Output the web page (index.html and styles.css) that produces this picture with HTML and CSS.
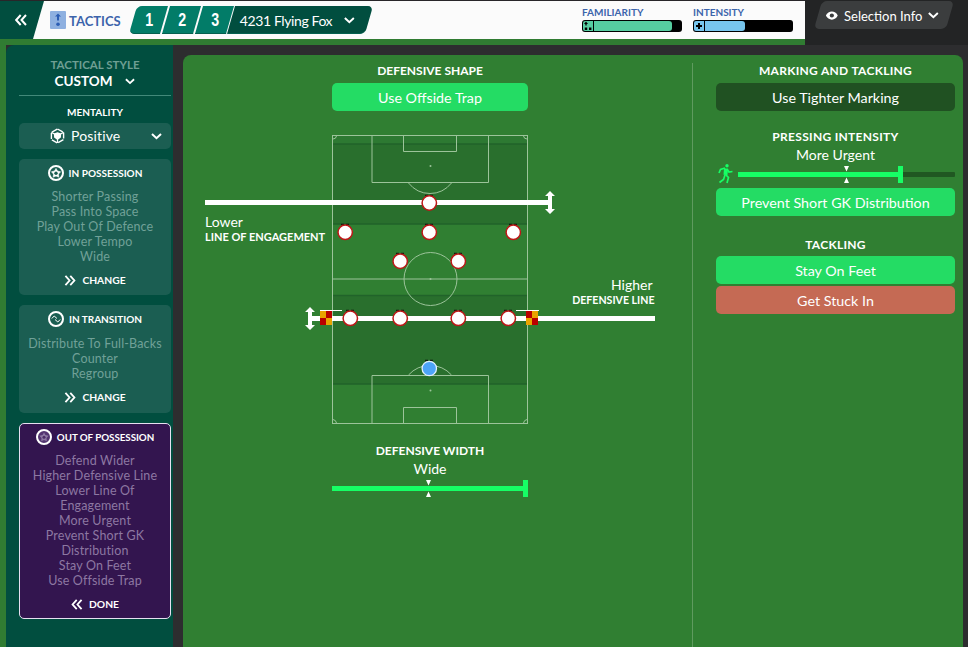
FILE: index.html
```html
<!DOCTYPE html>
<html lang="en">
<head>
    <meta charset="UTF-8">
    <meta name="viewport" content="width=device-width, initial-scale=1.0">
    <title>Tactics</title>
    <link rel="stylesheet" href="styles.css">
</head>
<body>
    <header class="topbar">
        <div class="topbar-main">
            <div class="back">
                <svg width="12" height="12" viewBox="0 0 12 12"><path class="chevron" d="M5.7 1 L1.2 6 L5.7 11 M11 1 L6.5 6 L11 11"/></svg>
            </div>
            <div class="brand">
                <svg width="16" height="18" viewBox="0 0 16 18">
                    <rect width="16" height="18" rx="1" fill="#8eb0e0"/>
                    <path d="M8 2.5 L11 5.5 H9 V9.5 H7 V5.5 H5 Z" fill="#2c5db3"/>
                    <circle cx="8" cy="13.2" r="1.8" fill="#2c5db3"/>
                </svg>
                <span>TACTICS</span>
            </div>
            <nav class="tabs">
                <div class="tab tab-first"><span>1</span></div>
                <div class="tab"><span>2</span></div>
                <div class="tab"><span>3</span></div>
                <div class="tab-name">
                    <span>4231 Flying Fox</span>
                    <svg width="11" height="7" viewBox="0 0 11 7"><path class="chevron" d="M1 1 L5.5 5.2 L10 1"/></svg>
                </div>
            </nav>
            <div class="meters">
                <div class="meter">
                    <div class="meter-label">FAMILIARITY</div>
                    <div class="meter-bar mint">
                        <div class="meter-icon">
                            <svg width="10" height="10" viewBox="0 0 10 10"><path d="M3 0.5 L5 3 H1 Z M2.3 3 H3.7 V4.5 H2.3 Z M1.8 6.5 H4.2 V9 H1.8 Z M6 6.5 H8.4 V9 H6 Z"/></svg>
                        </div>
                        <div class="meter-fill" style="width: 78px"></div>
                    </div>
                </div>
                <div class="meter">
                    <div class="meter-label">INTENSITY</div>
                    <div class="meter-bar sky">
                        <div class="meter-icon">
                            <svg width="10" height="10" viewBox="0 0 10 10"><path d="M4 2 H6 V4 H8 V6 H6 V8 H4 V6 H2 V4 H4 Z"/></svg>
                        </div>
                        <div class="meter-fill" style="width: 40px"></div>
                    </div>
                </div>
            </div>
        </div>
        <div class="topbar-side">
            <div class="selection">
                <svg width="12" height="9" viewBox="0 0 12 9"><path d="M0 4.5 C2.5 -1 9.5 -1 12 4.5 C9.5 10 2.5 10 0 4.5 Z" fill="#fff"/><circle cx="6" cy="4.5" r="2.1" fill="#3b3d3e"/></svg>
                <span>Selection Info</span>
                <svg width="11" height="7" viewBox="0 0 11 7"><path class="chevron" d="M1 1 L5.5 5.2 L10 1"/></svg>
            </div>
        </div>
    </header>

    <div class="page">
        <aside class="sidebar">
            <div class="style">
                <div class="style-label">TACTICAL STYLE</div>
                <div class="style-value">
                    <span>CUSTOM</span>
                    <svg width="10" height="7" viewBox="0 0 11 7"><path class="chevron" d="M1 1 L5.5 5.2 L10 1"/></svg>
                </div>
            </div>
            <div class="mentality-label">MENTALITY</div>
            <div class="mentality">
                <svg width="15" height="16" viewBox="0 0 15 16">
                    <path d="M7.5 1 L13.6 4.4 V11.6 L7.5 15 L1.4 11.6 V4.4 Z" fill="none" stroke="#fff" stroke-width="1.4" stroke-dasharray="6 1.2"/>
                    <path d="M3.8 5.6 L7.5 4.2 L11.2 5.6 L10.9 9.6 L7.5 12 L4.1 9.6 Z" fill="#fff"/>
                    <path d="M1.4 4.4 L4.5 6 M13.6 4.4 L10.5 6 M7.5 11 V15" stroke="#fff" stroke-width="1.2"/>
                </svg>
                <span>Positive</span>
                <svg class="mentality-arrow" width="11" height="7" viewBox="0 0 11 7"><path class="chevron" d="M1 1 L5.5 5.2 L10 1"/></svg>
            </div>

            <section class="card">
                <h2>
                    <svg width="16" height="16" viewBox="0 0 16 16">
                        <circle cx="8" cy="8" r="7" fill="none" stroke="#fff" stroke-width="2"/>
                        <path d="M8 3.4 L9.5 6 L12.6 6.8 L10.5 9.1 L10.8 12.2 L8 11 L5.2 12.2 L5.5 9.1 L3.4 6.8 L6.5 6 Z" fill="#fff" stroke="#fff" stroke-width=".6"/>
                        <circle cx="8" cy="8.3" r="1.7" fill="#1b5e52"/>
                    </svg>
                    <span>IN POSSESSION</span>
                </h2>
                <ul>
                    <li>Shorter Passing</li>
                    <li>Pass Into Space</li>
                    <li>Play Out Of Defence</li>
                    <li>Lower Tempo</li>
                    <li>Wide</li>
                </ul>
                <div class="action">
                    <svg width="12" height="11" viewBox="0 0 12 12"><path class="chevron" d="M1 1 L5.5 6 L1 11 M6.3 1 L10.8 6 L6.3 11"/></svg>
                    <span>CHANGE</span>
                </div>
            </section>

            <section class="card card-short">
                <h2>
                    <svg width="16" height="16" viewBox="0 0 16 16">
                        <circle cx="8" cy="8" r="7" fill="none" stroke="#fff" stroke-width="2"/>
                        <path d="M3.8 7.5 L6.2 5 L9 7.5 M12.2 8.5 L9.8 11 L7 8.5" fill="none" stroke="#fff" stroke-width="1"/>
                    </svg>
                    <span>IN TRANSITION</span>
                </h2>
                <ul>
                    <li>Distribute To Full-Backs</li>
                    <li>Counter</li>
                    <li>Regroup</li>
                </ul>
                <div class="action">
                    <svg width="12" height="11" viewBox="0 0 12 12"><path class="chevron" d="M1 1 L5.5 6 L1 11 M6.3 1 L10.8 6 L6.3 11"/></svg>
                    <span>CHANGE</span>
                </div>
            </section>

            <section class="card card-active">
                <h2>
                    <svg width="16" height="16" viewBox="0 0 16 16">
                        <circle cx="8" cy="8" r="7" fill="#543571" stroke="#fff" stroke-width="2"/>
                        <path d="M8 3.4 L9.5 6 L12.6 6.8 L10.5 9.1 L10.8 12.2 L8 11 L5.2 12.2 L5.5 9.1 L3.4 6.8 L6.5 6 Z" fill="#8d78a2"/>
                        <circle cx="8" cy="8.3" r="1.5" fill="#4b2d66"/>
                    </svg>
                    <span>OUT OF POSSESSION</span>
                </h2>
                <ul>
                    <li>Defend Wider</li>
                    <li>Higher Defensive Line</li>
                    <li>Lower Line Of<br>Engagement</li>
                    <li>More Urgent</li>
                    <li>Prevent Short GK<br>Distribution</li>
                    <li>Stay On Feet</li>
                    <li>Use Offside Trap</li>
                </ul>
                <div class="action">
                    <svg width="12" height="11" viewBox="0 0 12 12"><path class="chevron" d="M5.7 1 L1.2 6 L5.7 11 M11 1 L6.5 6 L11 11"/></svg>
                    <span>DONE</span>
                </div>
            </section>
        </aside>

        <main class="content">
            <section class="shape">
                <h3>DEFENSIVE SHAPE</h3>
                <div class="option on narrow">Use Offside Trap</div>
                <svg class="pitch" width="452" height="300" viewBox="204 130 452 300">
                    <!-- mown stripes -->
                    <rect x="332" y="135" width="196" height="10" fill="#2d7932"/>
                    <rect x="332" y="144" width="196" height="80" fill="#296f2d"/>
                    <rect x="332" y="295" width="196" height="89" fill="#296f2d"/>
                    <path d="M333 144 H527 M333 224 H527 M333 295.5 H527 M333 384 H527" stroke="#21632a" stroke-width="1.6"/>
                    <!-- markings -->
                    <g class="marking">
                        <rect x="332.5" y="135.5" width="195" height="288"/>
                        <path d="M332.5 279 H527.5"/>
                        <path d="M372 136 V182.5 H488.5 V136 M403.5 136 V151.5 H456.5 V136"/>
                        <path d="M372 423 V375.5 H488.5 V423 M403.5 423 V407.5 H456.5 V423"/>
                        <path d="M408.5 183 Q417 193.5 430 193.5 Q443 193.5 451.5 183"/>
                        <path d="M408.5 375 Q417 365.5 430 365.5 Q443 365.5 451.5 375"/>
                        <circle cx="430.5" cy="279" r="26.5"/>
                        <path d="M333 139 Q336 139 336.5 136 M527 139 Q524 139 523.5 136 M333 419.5 Q336 420 336.5 423 M527 419.5 Q524 420 523.5 423"/>
                    </g>
                    <g fill="#9cc49a">
                        <circle cx="430.5" cy="166" r="1"/>
                        <circle cx="430.5" cy="279" r="1"/>
                        <circle cx="430.5" cy="390.5" r="1"/>
                    </g>
                    <!-- line of engagement -->
                    <rect x="205" y="200" width="345" height="5" fill="#fff"/>
                    <path d="M550 191 L555 196 H552 V209 H555 L550 214 L545 209 H548 V196 H545 Z" fill="#fff"/>
                    <text class="level" x="205" y="227">Lower</text>
                    <text class="level-name" x="205" y="241">LINE OF ENGAGEMENT</text>
                    <!-- defensive line -->
                    <rect x="310" y="316" width="345" height="5" fill="#fff"/>
                    <path d="M310 307 L315 312 H312 V325 H315 L310 330 L305 325 H308 V312 H305 Z" fill="#fff"/>
                    <text class="level" x="611" y="290">Higher</text>
                    <text class="level-name level-right" x="654.5" y="304">DEFENSIVE LINE</text>
                    <!-- linesman flags -->
                    <path d="M320 310.5 H342 M516 310.5 H539" stroke="#fff"/>
                    <rect x="320" y="311" width="12" height="14" fill="#e9a400"/>
                    <path d="M326 311 H332 V318 H326 Z M320 318 H326 V325 H320 Z" fill="#b90000"/>
                    <rect x="526" y="311" width="12" height="14" fill="#e9a400"/>
                    <path d="M526 311 H532 V318 H526 Z M532 318 H538 V325 H532 Z" fill="#b90000"/>
                    <!-- players -->
                    <path class="hair" d="M425 195.5 h8 M341 224.5 h8 M425 224.5 h8 M509 224.5 h8 M396 253.5 h8 M454 253.5 h8 M346 310.5 h8 M396 310.5 h8 M454 310.5 h8 M504 310.5 h8 M425 360.5 h8"/>
                    <g class="player">
                        <circle cx="429.3" cy="203" r="7.2"/>
                        <circle cx="345.2" cy="232.3" r="7.2"/>
                        <circle cx="429.3" cy="232.3" r="7.2"/>
                        <circle cx="513.3" cy="232.3" r="7.2"/>
                        <circle cx="400.2" cy="261.2" r="7.2"/>
                        <circle cx="458.3" cy="261.2" r="7.2"/>
                        <circle cx="350.3" cy="318.3" r="7.2"/>
                        <circle cx="400.2" cy="318.3" r="7.2"/>
                        <circle cx="458.3" cy="318.3" r="7.2"/>
                        <circle cx="508.3" cy="318.3" r="7.2"/>
                    </g>
                    <circle class="keeper" cx="429.3" cy="368.5" r="7.2"/>
                </svg>
                <h3 class="width-title">DEFENSIVE WIDTH</h3>
                <div class="value">Wide</div>
                <svg class="width-slider" width="196" height="18" viewBox="0 0 196 18">
                    <rect y="6" width="194" height="5" fill="#16ff65"/>
                    <rect x="191" width="5" height="17" fill="#16ff65"/>
                    <path class="tick" d="M94 0 H99 L96.5 5.5 Z M94 17 H99 L96.5 11.5 Z"/>
                </svg>
            </section>

            <section class="marking-panel">
                <h3>MARKING AND TACKLING</h3>
                <div class="option off">Use Tighter Marking</div>
                <h3 class="pressing-title">PRESSING INTENSITY</h3>
                <div class="value">More Urgent</div>
                <svg class="pressing" width="239" height="22" viewBox="716 164 239 22">
                    <rect x="738" y="172" width="217" height="5" rx="1" fill="#205722"/>
                    <rect x="738" y="172" width="162" height="5" fill="#16ff65"/>
                    <rect x="898" y="166" width="5" height="17" fill="#16ff65"/>
                    <path class="tick" d="M844 166 H849 L846.5 171.5 Z M844 183 H849 L846.5 177.5 Z"/>
                    <circle cx="727" cy="165.8" r="1.7" fill="#16ff65"/>
                    <path class="runner" d="M726 168.5 L725.5 175" stroke-width="4"/>
                    <path class="runner" d="M725 168 L720.5 169.5 L719 173 M727 169 L729 172 L732.5 171.5 M726 175 L728.5 177.5 L727 183 M725 175 L723.5 179.5 L719.5 182.5" stroke-width="1.7"/>
                </svg>
                <div class="option on">Prevent Short GK Distribution</div>
                <h3 class="tackling-title">TACKLING</h3>
                <div class="option on">Stay On Feet</div>
                <div class="option bad">Get Stuck In</div>
            </section>
        </main>
    </div>
</body>
</html>
```

FILE: styles.css
```css
* {
    box-sizing: border-box;
}
body {
    margin: 0;
    width: 968px;
    height: 647px;
    overflow: hidden;
    background-color: #2d2d2f;
    font-family: Lato, "Liberation Sans", sans-serif;
    color: #fff;
    white-space: nowrap;
}
svg {
    display: block;
    flex: none;
}
h2, h3, ul {
    margin: 0;
    padding: 0;
    list-style: none;
}
.chevron {
    fill: none;
    stroke: #fff;
    stroke-width: 2;
}

/* top bar */
.topbar {
    display: flex;
    height: 45px;
    background-color: #232425;
}
.topbar-main {
    display: flex;
    width: 805px;
    background-color: #fbfbfb;
    border-top: 1px solid #282629;
    border-bottom: 6px solid #307c32;
}
.back {
    width: 44px;
    padding: 13px 0 0 15px;
    background-color: #014e3f;
    clip-path: polygon(0 0, 100% 0, 33px 100%, 0 100%);
}
.brand {
    display: flex;
    align-items: center;
    gap: 3px;
    width: 79px;
    padding-left: 6px;
    color: #3c64ab;
    font-size: 13px;
    font-weight: bold;
}
.brand span {
    padding-top: 1px;
}
.tabs {
    display: flex;
    gap: 2px;
    width: 250px;
    padding: 5px 0 0 10px;
}
.tab, .tab-name {
    display: flex;
    align-items: center;
    justify-content: center;
    height: 28px;
    background-color: #027c68;
    border-bottom: 1px solid #03604f;
    transform: skewX(-16deg);
}
.tab {
    width: 31px;
    padding: 1px 0 0 1px;
    font-family: "Liberation Sans", sans-serif;
    font-size: 19px;
    font-weight: bold;
}
.tab span {
    transform: skewX(16deg) scaleX(.75);
}
.tab-first {
    border-radius: 5px 0 0 5px;
}
.tab-name {
    gap: 12px;
    width: 138px;
    margin-left: -1px;
    padding: 2px 5px 0 0;
    background-color: #014e3f;
    border-radius: 0 5px 5px 0;
    font-size: 14px;
    letter-spacing: -.4px;
}
.tab-name span, .tab-name svg {
    transform: skewX(16deg);
}
.meters {
    display: flex;
    gap: 11px;
    margin-left: auto;
    padding: 4px 12px 0 0;
}
.meter {
    width: 100px;
}
.meter-label {
    height: 15px;
    color: #3c64ab;
    font-size: 10px;
    font-weight: bold;
    line-height: 14px;
}
.meter-bar {
    display: flex;
    gap: 1px;
    height: 12px;
    padding: 1px;
    border-radius: 3px;
    background-color: #000;
}
.meter-icon {
    width: 10px;
    border-radius: 2px 0 0 2px;
}
.meter-fill {
    border-radius: 0 3px 3px 0;
}
.mint .meter-icon, .mint .meter-fill {
    background-color: #56cda0;
}
.sky .meter-icon, .sky .meter-fill {
    background-color: #77c5ed;
}
.topbar-side {
    padding: 1px 0 0 13px;
}
.selection {
    display: flex;
    align-items: center;
    gap: 6px;
    width: 132px;
    height: 28px;
    padding-left: 8px;
    background-color: #3b3d3e;
    border-radius: 5px;
    transform: skewX(-16deg);
    font-size: 13px;
}
.selection > * {
    transform: skewX(16deg);
}
.selection span {
    padding-top: 2px;
}

/* sidebar */
.page {
    display: flex;
    height: 602px;
    border-left: 6px solid #307c32;
}
.sidebar {
    width: 167px;
    padding: 13px 2px 0 13px;
    background-color: #014e3f;
    border-radius: 8px 0 0 0;
    text-align: center;
}
.style {
    height: 38px;
    border-bottom: 1px solid #43897a;
}
.style-label {
    color: #6f9f93;
    font-size: 11.5px;
    font-weight: bold;
    line-height: 14px;
}
.style-value {
    display: flex;
    justify-content: center;
    align-items: center;
    gap: 13px;
    font-size: 13.5px;
    font-weight: bold;
    line-height: 19px;
}
.mentality-label {
    height: 27px;
    padding-top: 9px;
    font-size: 10px;
    font-weight: bold;
    line-height: 15px;
}
.mentality {
    display: flex;
    align-items: center;
    gap: 6px;
    height: 26px;
    padding: 0 9px 0 31px;
    border-radius: 5px;
    background-color: #1b5e52;
    font-size: 14px;
    letter-spacing: .15px;
}
.mentality span {
    padding-bottom: 1px;
}
.mentality-arrow {
    margin-left: auto;
}
.card {
    height: 136px;
    margin-top: 10px;
    border-radius: 5px;
    background-color: #1b5e52;
}
.card h2 {
    display: flex;
    align-items: center;
    justify-content: center;
    gap: 5px;
    height: 28px;
    font-size: 10px;
}
.card ul {
    padding-top: 2px;
    color: #71a198;
    font-size: 12.5px;
    letter-spacing: .15px;
    line-height: 15px;
}
.action {
    display: flex;
    align-items: center;
    justify-content: center;
    gap: 6px;
    height: 32px;
    font-size: 10.3px;
    font-weight: bold;
}
.card-short {
    height: 108px;
}
.card-short ul {
    padding-top: 3px;
}
.card-active {
    height: 196px;
    border: 1px solid #e6e0f0;
    background-color: #33154f;
}
.card-active h2 {
    height: 26px;
    font-size: 9.8px;
    letter-spacing: -.05px;
}
.card-active ul {
    padding-top: 3px;
    color: #8d78a2;
}

/* main area */
.content {
    display: flex;
    width: 780px;
    margin: 10px 0 0 10px;
    padding-top: 8px;
    background-color: #307f32;
    border-radius: 8px 8px 0 0;
}
.shape {
    display: flex;
    flex-direction: column;
    align-items: center;
    width: 510px;
    padding-right: 15px;
    border-right: 1px solid #5f9b5f;
}
.marking-panel {
    width: 262px;
    padding-left: 23px;
}
h3 {
    height: 20px;
    font-size: 12px;
    line-height: 15px;
    text-align: center;
}
.option {
    height: 28px;
    border-radius: 5px;
    font-size: 14.3px;
    line-height: 30px;
    text-align: center;
}
.narrow {
    width: 196px;
}
.on {
    background-color: #24dc64;
}
.off {
    background-color: #205122;
}
.bad {
    margin-top: 2px;
    background-color: #c56a54;
}
.value {
    height: 18px;
    font-size: 14px;
    line-height: 18px;
    text-align: center;
}
.pitch {
    margin-top: 19px;
}
.marking {
    fill: none;
    stroke: #9cc49a;
}
.level {
    fill: #fff;
    font-size: 14px;
}
.level-name {
    fill: #fff;
    font-size: 11px;
    font-weight: bold;
}
.level-right {
    font-size: 10.6px;
    text-anchor: end;
}
.player {
    fill: #fff;
    stroke: #bd1717;
    stroke-width: 1.5;
}
.hair {
    fill: none;
    stroke: #101c10;
    stroke-width: 1.5;
    stroke-dasharray: 3 2;
}
.keeper {
    fill: #4da4f7;
    stroke: #e2f1ff;
    stroke-width: 1.3;
}
.width-title {
    margin-top: 13px;
    height: 17px;
}
.width-slider {
    margin-top: 2px;
}
.tick {
    fill: #fff;
}
.marking-panel h3 {
    letter-spacing: .3px;
}
.pressing-title {
    margin-top: 18px;
    height: 17px;
}
.pressing {
    margin-bottom: 2px;
}
.runner {
    fill: none;
    stroke: #16ff65;
}
.tackling-title {
    margin-top: 20px;
    line-height: 17px;
}
```
